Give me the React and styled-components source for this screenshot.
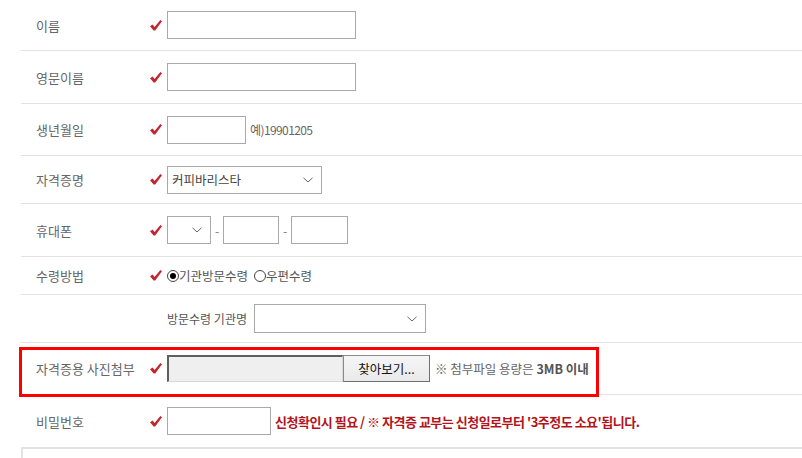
import React from 'react';
import styled, { createGlobalStyle } from 'styled-components';

const GlobalStyle = createGlobalStyle`
  body {
    margin: 0;
    background: #fff;
    font-family: "Noto Sans CJK KR", "Noto Sans", sans-serif;
    font-size: 12px;
    color: #666;
    overflow: hidden;
  }
`;

const FormWrap = styled.div`
  margin-left: 21px;
  width: 781px;
`;

const Row = styled.div`
  position: relative;
  display: flex;
  align-items: center;
  height: ${(p) => p.$h}px;
  box-sizing: border-box;
  border-bottom: ${(p) => (p.$last ? 'none' : '1px solid #e3e3e3')};
`;

const Label = styled.div`
  flex: 0 0 129px;
  box-sizing: border-box;
  padding-left: 15px;
  color: #666;
  font-size: 13px;
  white-space: nowrap;
`;

const Mark = styled.div`
  flex: 0 0 17px;
  display: flex;
  align-items: center;
  height: 12px;
`;

const Field = styled.div`
  display: flex;
  align-items: center;
  gap: ${(p) => p.$gap ?? 4}px;
  white-space: nowrap;
`;

const TextInput = styled.div`
  width: ${(p) => p.$w}px;
  height: 28px;
  box-sizing: border-box;
  border: 1px solid #a9a9a9;
  background: #fff;
`;

const SelectBox = styled.div`
  width: ${(p) => p.$w}px;
  height: ${(p) => p.$hh ?? 28}px;
  box-sizing: border-box;
  border: 1px solid #a9a9a9;
  background: #fff;
  display: flex;
  align-items: center;
  justify-content: space-between;
  padding: 0 8px 0 4px;
  color: #444;
  font-size: 12.5px;
`;

const Hint = styled.span`
  color: #666;
  font-size: ${(p) => p.$fs ?? 12}px;
  letter-spacing: ${(p) => p.$ls ?? 0}px;
  margin-left: ${(p) => p.$ml ?? 0}px;
`;

const Dash = styled.span`
  width: 4px;
  color: #777;
  font-size: 12px;
`;

const RadioLabel = styled.label`
  display: inline-flex;
  align-items: center;
  color: #555;
  font-size: 12.5px;
  margin-right: 6px;
`;

const RadioDot = styled.span`
  width: 12px;
  height: 12px;
  box-sizing: border-box;
  border-radius: 50%;
  border: 1px solid #444;
  background: #fff;
  display: inline-flex;
  align-items: center;
  justify-content: center;
  &::after {
    content: '';
    width: 6px;
    height: 6px;
    border-radius: 50%;
    background: ${(p) => (p.$on ? '#000' : 'transparent')};
  }
`;

const SubLabel = styled.span`
  color: #555;
  font-size: 12px;
  margin-right: 7px;
`;

const FileText = styled.div`
  width: 176px;
  height: 27px;
  box-sizing: border-box;
  border-style: solid;
  border-width: 2px 1px 1px 2px;
  border-color: #5f5f5f #d8d8d8 #d8d8d8 #5f5f5f;
  background: #efefef;
`;

const FileButton = styled.div`
  width: 87px;
  height: 27px;
  box-sizing: border-box;
  border: 1px solid #8a8a8a;
  border-right-color: #6f6f6f;
  border-bottom-color: #6f6f6f;
  background: linear-gradient(#f6f6f6, #e9e9e9);
  display: flex;
  align-items: center;
  justify-content: center;
  color: #111;
  font-size: 12.5px;
`;

const Strong = styled.b`
  color: #555;
  font-weight: 700;
`;

const Warn = styled.span`
  color: #b3131b;
  font-weight: 700;
  font-size: 13px;
  letter-spacing: -0.5px;
`;

const Highlight = styled.div`
  position: absolute;
  left: -2px;
  top: 4px;
  width: 580px;
  height: 50px;
  box-sizing: border-box;
  border: 3px solid #ff0000;
  pointer-events: none;
`;

const BottomBox = styled.div`
  height: 40px;
  border-top: 2px solid #e3e3e3;
  border-left: 2px solid #e3e3e3;
`;

function Check() {
  return (
    <svg width="12" height="11" viewBox="0 0 12 11">
      <path d="M0 6.3 L2.6 4.4 L4.6 7 L10.4 0 L12 1.2 L5.2 10.6 L3.6 10.6 Z" fill="#c1262d" />
    </svg>
  );
}

function Chevron() {
  return (
    <svg width="10" height="6" viewBox="0 0 10 6">
      <path d="M0.5 0.8 L5 5 L9.5 0.8" fill="none" stroke="#666" strokeWidth="1" />
    </svg>
  );
}

function FormRow({ label, h, last, children }) {
  return (
    <Row $h={h} $last={last}>
      <Label>{label}</Label>
      <Mark>{label && <Check />}</Mark>
      {children}
    </Row>
  );
}

export default function App() {
  return (
    <>
      <GlobalStyle />
      <FormWrap>
        <FormRow label="이름" h={51}>
          <TextInput $w={189} />
        </FormRow>
        <FormRow label="영문이름" h={53}>
          <TextInput $w={189} />
        </FormRow>
        <FormRow label="생년월일" h={52}>
          <Field>
            <TextInput $w={79} />
            <Hint $ls={-0.6}>예)19901205</Hint>
          </Field>
        </FormRow>
        <FormRow label="자격증명" h={48}>
          <SelectBox $w={155}>
            커피바리스타
            <Chevron />
          </SelectBox>
        </FormRow>
        <FormRow label="휴대폰" h={53}>
          <Field $gap={4}>
            <SelectBox $w={44}>
              <span />
              <Chevron />
            </SelectBox>
            <Dash>-</Dash>
            <TextInput $w={56} />
            <Dash>-</Dash>
            <TextInput $w={57} />
          </Field>
        </FormRow>
        <FormRow label="수령방법" h={38}>
          <Field $gap={0}>
            <RadioLabel>
              <RadioDot $on />
              기관방문수령
            </RadioLabel>
            <RadioLabel>
              <RadioDot />
              우편수령
            </RadioLabel>
          </Field>
        </FormRow>
        <FormRow label="" h={48}>
          <Field $gap={0}>
            <SubLabel>방문수령 기관명</SubLabel>
            <SelectBox $w={172} $hh={29}>
              <span />
              <Chevron />
            </SelectBox>
          </Field>
        </FormRow>
        <FormRow label="자격증용 사진첨부" h={52}>
          <Field $gap={0}>
            <FileText />
            <FileButton>찾아보기...</FileButton>
            <Hint $fs={12.5} $ml={5}>
              ※ 첨부파일 용량은 <Strong>3MB 이내</Strong>
            </Hint>
          </Field>
          <Highlight />
        </FormRow>
        <FormRow label="비밀번호" h={52} last>
          <Field $gap={4}>
            <TextInput $w={104} />
            <Warn>신청확인시 필요 / ※ 자격증 교부는 신청일로부터 '3주정도 소요'됩니다.</Warn>
          </Field>
        </FormRow>
        <BottomBox />
      </FormWrap>
    </>
  );
}
